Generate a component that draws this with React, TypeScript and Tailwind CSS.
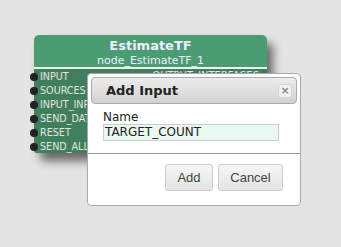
const inputs = ["INPUT", "SOURCES", "INPUT_INPUTS", "SEND_DATA", "RESET", "SEND_ALL"];

function NodeBox() {
  return (
    <div className="absolute left-[34px] top-[35px] w-[233px] rounded-[5px] shadow-[6px_8px_10px_rgba(0,0,0,0.55)]">
      <div className="h-[34px] rounded-t-[5px] bg-[#4b9c73] text-center border-b-2 border-[#f2f2f2]">
        <div className="pt-[2px] text-[13px] font-bold leading-[17px] text-[#eef]">EstimateTF</div>
        <div className="text-[11px] leading-[14px] text-[#e8f0ff]">node_EstimateTF_1</div>
      </div>
      <div className="relative h-[84px] rounded-b-[3px] bg-[#3f7f5b] pt-[1px]">
        <ul className="flex flex-col">
          {inputs.map((name) => (
            <li key={name} className="relative flex h-[14px] items-center pl-[6px] text-[9.6px] leading-[14px] text-[#e4e4e4]">
              <span className="absolute -left-[4px] top-[3px] h-[8px] w-[8px] rounded-full bg-[#222]" />
              {name}
            </li>
          ))}
        </ul>
        <div className="absolute right-[8px] top-[1px] text-[10px] leading-[12px] text-[#e4e4e4]">OUTPUT_INTERFACES</div>
      </div>
    </div>
  );
}

function Dialog() {
  return (
    <div className="absolute left-[87px] top-[73px] h-[133px] w-[214px] rounded-[4px] border border-[#aaa] bg-white p-[3px]">
      <div className="flex h-[27px] items-center justify-between rounded-[4px] border border-[#aaa] bg-gradient-to-b from-[#ececec] to-[#d2d2d2] pl-[14px] pr-[4px]">
        <span className="text-[13px] font-bold text-[#222]">Add Input</span>
        <span className="flex h-[14px] w-[14px] items-center justify-center rounded-[3px] border border-[#d4d4d4] bg-[#f2f2f2] text-[11px] font-bold leading-none text-[#888]">×</span>
      </div>
      <div className="px-[12px] pt-[6px]">
        <div className="text-[12px] leading-[14px] text-[#222]">Name</div>
        <div className="h-[17px] w-[176px] border border-[#ccc] bg-[#e9f8f0] pl-[1px] text-[12px] leading-[15px] text-[#222]">TARGET_COUNT</div>
      </div>
      <div className="mt-[12px] -mx-[3px] border-t border-[#999]" />
      <div
        className="flex justify-end gap-[5px] pr-[14px] pt-[10px]"
        style={{ fontFamily: '"Liberation Sans", Arial, sans-serif' }}
      >
        <button className="h-[27px] w-[48px] rounded-[3px] border border-[#ccc] bg-gradient-to-b from-[#f6f6f6] to-[#e4e4e4] text-[13px] text-[#444]">Add</button>
        <button className="h-[27px] w-[65px] rounded-[3px] border border-[#ccc] bg-gradient-to-b from-[#f6f6f6] to-[#e4e4e4] text-[13px] text-[#444]">Cancel</button>
      </div>
    </div>
  );
}

export default function App() {
  return (
    <div
      className="relative h-[247px] w-[341px] overflow-hidden bg-[#e4e4e4]"
      style={{ fontFamily: '"DejaVu Sans", "Liberation Sans", sans-serif' }}
    >
      <NodeBox />
      <Dialog />
    </div>
  );
}
